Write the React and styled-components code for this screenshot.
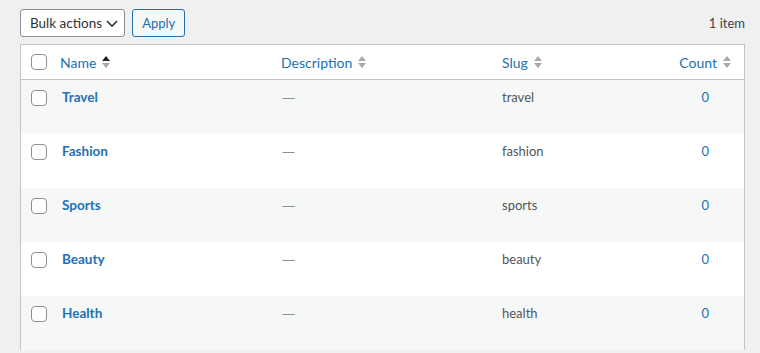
import React from "react";
import styled, { createGlobalStyle } from "styled-components";

const GlobalStyle = createGlobalStyle`
  html, body {
    margin: 0;
    padding: 0;
    background: #f0f0f1;
    font-family: Lato, "Noto Sans", sans-serif;
    color: #3c434a;
  }
`;

const Page = styled.div`
  width: 760px;
  height: 353px;
  overflow: hidden;
  padding: 9px 15px 0 20px;
  box-sizing: border-box;
`;

const Toolbar = styled.div`
  display: flex;
  align-items: center;
  gap: 7px;
  height: 28px;
  margin-bottom: 7px;
`;

const Select = styled.div`
  display: flex;
  align-items: center;
  gap: 3px;
  height: 28px;
  box-sizing: border-box;
  padding: 0 5px 0 9px;
  background: #fff;
  border: 1px solid #8c8f94;
  border-radius: 3px;
  font-size: 13.5px;
  color: #2c3338;
`;

const Button = styled.div`
  display: flex;
  align-items: center;
  height: 28px;
  box-sizing: border-box;
  padding: 0 9px;
  background: #f6f7f7;
  border: 1px solid #2271b1;
  border-radius: 3px;
  font-size: 13px;
  color: #2271b1;
`;

const Count = styled.div`
  margin-left: auto;
  font-size: 13px;
  color: #3c434a;
`;

const Table = styled.div`
  background: #fff;
  border: 1px solid #c3c4c7;
  border-bottom: none;
`;

const Row = styled.div`
  display: grid;
  grid-template-columns: 31px 221px 221px 1fr 100px;
  height: ${(p) => (p.$head ? "34px" : "54px")};
  align-items: ${(p) => (p.$head ? "center" : "start")};
  background: ${(p) => (p.$shaded ? "#f6f7f7" : "#fff")};
  border-bottom: ${(p) => (p.$head ? "1px solid #c3c4c7" : "none")};
`;

const Cell = styled.div`
  display: flex;
  align-items: center;
  justify-content: ${(p) => (p.$right ? "flex-end" : "flex-start")};
  padding: ${(p) => (p.$head ? "0 12px 0 8px" : `7px 35px 0 ${p.$title ? 10 : 8}px`)};
  height: ${(p) => (p.$head ? "auto" : "20px")};
  font-size: 13px;
  color: #50575e;
`;

const CheckCell = styled.div`
  display: flex;
  padding-left: 10px;
  padding-top: ${(p) => (p.$head ? "0" : "10px")};
`;

const Box = styled.span`
  width: 16px;
  height: 16px;
  box-sizing: border-box;
  border: 1px solid #8c8f94;
  border-radius: 4px;
  background: #fff;
`;

const HeadLink = styled.span`
  display: flex;
  align-items: center;
  gap: 5px;
  font-size: 14px;
  color: #2271b1;
`;

const Title = styled.span`
  font-size: 13.5px;
  font-weight: 700;
  color: #2271b1;
`;

const Dash = styled.span`
  font-family: "Noto Sans", sans-serif;
  font-size: 13px;
  color: #8c8f94;
  margin-left: 1px;
`;

const Num = styled.span`
  color: #2271b1;
`;

const SortIcon = ({ active }) => (
  <svg width="10" height="16" viewBox="0 0 10 16">
    <path d="M1 7 L5 2 L9 7 Z" fill={active ? "#1d2327" : "#a7aaad"} />
    <path d="M1 9 L5 14 L9 9 Z" fill="#a7aaad" />
  </svg>
);

const Chevron = () => (
  <svg width="14" height="14" viewBox="0 0 14 14">
    <path d="M2 5 L7 10 L12 5" fill="none" stroke="#2c3338" strokeWidth="1.6" />
  </svg>
);

const terms = ["Travel", "Fashion", "Sports", "Beauty", "Health"];

export default function App() {
  return (
    <Page>
      <GlobalStyle />
      <Toolbar>
        <Select>
          Bulk actions <Chevron />
        </Select>
        <Button>Apply</Button>
        <Count>1 item</Count>
      </Toolbar>
      <Table>
        <Row $head>
          <CheckCell $head>
            <Box />
          </CheckCell>
          <Cell $head>
            <HeadLink>
              Name <SortIcon active />
            </HeadLink>
          </Cell>
          <Cell $head>
            <HeadLink>
              Description <SortIcon />
            </HeadLink>
          </Cell>
          <Cell $head>
            <HeadLink>
              Slug <SortIcon />
            </HeadLink>
          </Cell>
          <Cell $head $right>
            <HeadLink>
              Count <SortIcon />
            </HeadLink>
          </Cell>
        </Row>
        {terms.map((t, i) => (
          <Row key={t} $shaded={i % 2 === 0}>
            <CheckCell>
              <Box />
            </CheckCell>
            <Cell $title>
              <Title>{t}</Title>
            </Cell>
            <Cell>
              <Dash>—</Dash>
            </Cell>
            <Cell>{t.toLowerCase()}</Cell>
            <Cell $right>
              <Num>0</Num>
            </Cell>
          </Row>
        ))}
      </Table>
    </Page>
  );
}
